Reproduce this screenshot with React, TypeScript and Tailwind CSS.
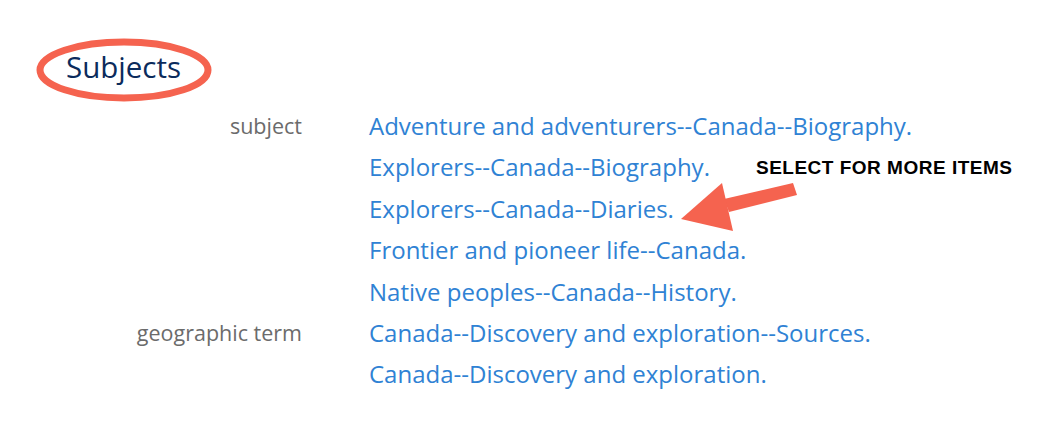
import React from "react";

const rows: { label: string; items: string[] }[] = [
  {
    label: "subject",
    items: [
      "Adventure and adventurers--Canada--Biography.",
      "Explorers--Canada--Biography.",
      "Explorers--Canada--Diaries.",
      "Frontier and pioneer life--Canada.",
      "Native peoples--Canada--History.",
    ],
  },
  {
    label: "geographic term",
    items: [
      "Canada--Discovery and exploration--Sources.",
      "Canada--Discovery and exploration.",
    ],
  },
];

export default function App() {
  return (
    <div
      className="relative w-[1056px] h-[422px] bg-white overflow-hidden"
      style={{ fontFamily: '"Open Sans", sans-serif' }}
    >
      <div className="pt-[47px] pl-[66px]">
        <h2 className="text-[29.5px] leading-[40px] text-[#0b2b5c] font-normal">Subjects</h2>
      </div>
      <div className="mt-[18px] grid grid-cols-[302px_1fr] leading-[41.4px]">
        {rows.map((r) => (
          <React.Fragment key={r.label}>
            <div className="text-right text-[#6b6b6b] text-[21.5px]">{r.label}</div>
            <div className="pl-[67px] flex flex-col text-[24px]">
              {r.items.map((it) => (
                <a key={it} href="#" className="text-[#2f82d4]">
                  {it}
                </a>
              ))}
            </div>
          </React.Fragment>
        ))}
      </div>

      {/* annotation overlay */}
      <svg
        className="absolute left-0 top-0 pointer-events-none"
        width="1056"
        height="422"
        viewBox="0 0 1056 422"
      >
        <ellipse cx="124" cy="70" rx="84" ry="28" fill="none" stroke="#f5634f" strokeWidth="7" />
        <polygon points="793,183 797,195 729,212 724,199" fill="#f5634f" />
        <polygon points="681,219 722,183 733,231" fill="#f5634f" />
      </svg>
      <div
        className="absolute left-[756px] top-[156px] text-[19px] font-bold tracking-[0.5px] text-black leading-[24px]"
        style={{ fontFamily: '"Liberation Sans", Arial, sans-serif' }}
      >
        SELECT FOR MORE ITEMS
      </div>
    </div>
  );
}
